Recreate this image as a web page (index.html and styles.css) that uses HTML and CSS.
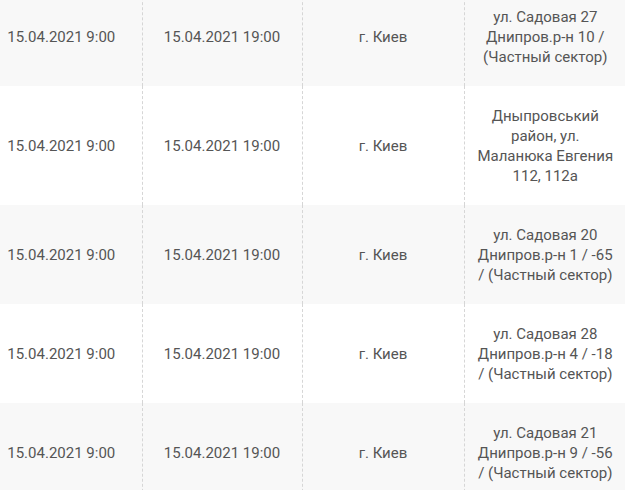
FILE: index.html
```html
<!DOCTYPE html>
<html lang="ru">
<head>
<meta charset="utf-8">
<link rel="stylesheet" href="styles.css">
</head>
<body>
<table class="schedule">
  <colgroup>
    <col class="c1"><col class="c2"><col class="c3"><col class="c4">
  </colgroup>
  <tbody>
    <tr class="odd">
      <td>15.04.2021 9:00</td><td>15.04.2021 19:00</td><td>г. Киев</td>
      <td>ул. Садовая 27 Днипров.р-н 10 / (Частный сектор)</td>
    </tr>
    <tr>
      <td>15.04.2021 9:00</td><td>15.04.2021 19:00</td><td>г. Киев</td>
      <td>Дныпровський район, ул. Маланюка Евгения 112, 112а</td>
    </tr>
    <tr class="odd">
      <td>15.04.2021 9:00</td><td>15.04.2021 19:00</td><td>г. Киев</td>
      <td>ул. Садовая 20 Днипров.р-н 1 / -65 / (Частный сектор)</td>
    </tr>
    <tr>
      <td>15.04.2021 9:00</td><td>15.04.2021 19:00</td><td>г. Киев</td>
      <td>ул. Садовая 28 Днипров.р-н 4 / -18 / (Частный сектор)</td>
    </tr>
    <tr class="odd">
      <td>15.04.2021 9:00</td><td>15.04.2021 19:00</td><td>г. Киев</td>
      <td>ул. Садовая 21 Днипров.р-н 9 / -56 / (Частный сектор)</td>
    </tr>
  </tbody>
</table>
</body>
</html>
```
FILE: styles.css
```css
html, body {
  margin: 0;
  padding: 0;
  background: #fff;
  overflow: hidden;
}
.schedule {
  border-collapse: collapse;
  table-layout: fixed;
  width: 645px;
  margin: -13px 0 0 -19px;
  font-family: Roboto, "Noto Sans", sans-serif;
  font-size: 15px;
  line-height: 20px;
  color: #555;
}
.c1 { width: 161px; }
.c2 { width: 160px; }
.c3 { width: 162px; }
.c4 { width: 162px; }
.schedule td {
  padding: 19.5px 12px;
  text-align: center;
  vertical-align: middle;
  border-left: 1px dashed #d6d6d6;
}
.schedule td:first-child {
  border-left: none;
}
.schedule tr.odd td {
  background: #f8f8f8;
}
```
